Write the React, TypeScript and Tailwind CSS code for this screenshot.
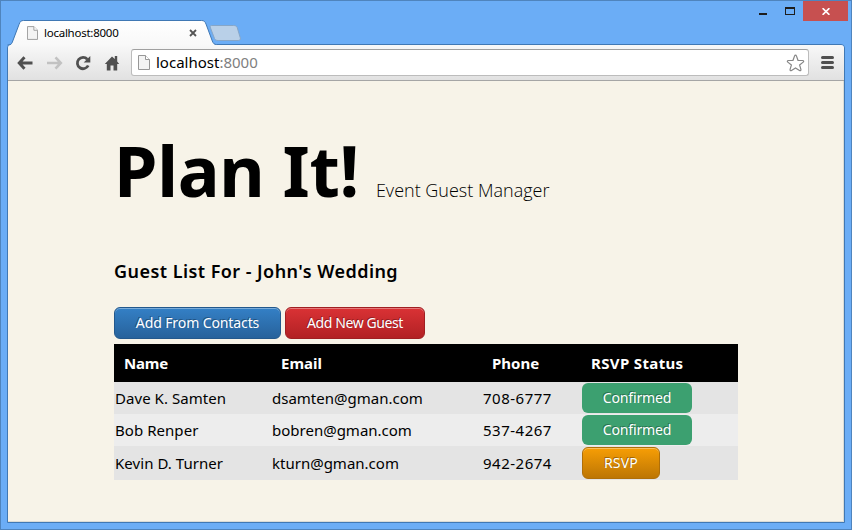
import type { ReactNode } from "react";

function PageIcon({ className }: { className: string }) {
  return (
    <svg viewBox="0 0 12 15" className={className} fill="none">
      <path d="M.5.5h7l4 4v10H.5z" fill="#f3f3f3" stroke="#979797" />
      <path d="M7.5.5v4h4" fill="#fff" stroke="#979797" />
    </svg>
  );
}

function TitleBar() {
  return (
    <header className="relative z-10 flex h-[44px] items-start">
      <svg viewBox="0 0 240 26" className="mt-[19px] -mr-[233px] h-[26px] w-[240px] shrink-0">
        <defs>
          <linearGradient id="tab" x1="0" y1="0" x2="0" y2="1">
            <stop offset="0" stopColor="#ffffff" />
            <stop offset="1" stopColor="#f8f8f8" />
          </linearGradient>
        </defs>
        <path
          d="M7 26c2-.3 3.500-1.500 4.300-3.500l6.700-18c1.100-3 2-4 4.500-4h178c2.500 0 3.500 1 4.500 3.500l6.300 17c1 2.500 2 3.500 4 3.500V26z"
          fill="url(#tab)"
        />
        <path
          d="M6.500 25c2.500 0 4-.7 4.800-2.800l6.700-17.700c1.100-3 2-4 4.500-4h178c2.500 0 3.500 1 4.500 3.500l6.300 17c1 2.500 2 3.500 4 3.500"
          fill="none"
          stroke="#4078b4"
        />
        <path
          d="M211.500 5.500h22c2 0 3 .5 3.700 2l3 10c.6 2-.2 3-2 3h-20c-2 0-3-.5-3.700-2l-4-10.500c-.6-1.600-.5-2.500 1-2.500z"
          fill="#b9d0e8"
          stroke="#86a6c8"
          transform="translate(-1 0)"
        />
      </svg>
      <div className="z-10 mt-[19px] ml-[19px] flex h-[25px] w-[170px] items-center">
        <PageIcon className="mt-px h-[14px] w-[11px]" />
        <span className="ml-[6px] grow text-[11.5px] leading-[16px] tracking-[-0.25px] text-black">localhost:8000</span>
        <svg viewBox="0 0 8 8" className="mt-px h-[8px] w-[8px]">
          <path d="M1 1l6 6M7 1L1 7" stroke="#555" strokeWidth="1.800" />
        </svg>
      </div>
      <div className="grow" />
      <svg viewBox="0 0 52 20" className="h-[20px] w-[52px]">
        <path d="M8 12h8v2H8z" fill="#1d1d1d" />
        <path d="M34 6h10v8H34zM35 8v5h8V8z" fill="#1d1d1d" fillRule="evenodd" />
      </svg>
      <div className="mr-[3px] flex h-[20px] w-[45px] items-center justify-center bg-[#c75050]">
        <svg viewBox="0 0 8 7" className="mt-px h-[7px] w-[8px]">
          <path d="M.6.2l6.800 6.600M7.400.2L.6 6.800" stroke="#fff" strokeWidth="1.700" />
        </svg>
      </div>
    </header>
  );
}

function Toolbar() {
  return (
    <div className="flex h-[36px] items-center rounded-t-[3px] border-b border-[#a5a5a5] bg-gradient-to-b from-[#f8f8f8] to-[#e1e1e1]">
      <svg viewBox="0 0 16 14" className="ml-[9px] h-[14px] w-[16px]">
        <path d="M7.500 1.300L2.200 7l5.300 5.700M2.500 7H15.500" fill="none" stroke="#505050" strokeWidth="2.900" />
      </svg>
      <svg viewBox="0 0 16 14" className="ml-[14px] h-[14px] w-[16px]">
        <path d="M8.500 1.300L13.800 7l-5.300 5.700M13.500 7H0" fill="none" stroke="#c2c2c2" strokeWidth="2.600" />
      </svg>
      <svg viewBox="0 0 16 16" className="ml-[12px] h-[16px] w-[16px]">
        <path d="M12.300 4.200A5.700 5.700 0 1 0 13.200 10.500" fill="none" stroke="#505050" strokeWidth="2.800" />
        <path d="M15.300 1v6.600H8.700z" fill="#505050" />
      </svg>
      <svg viewBox="0 0 16 16" className="ml-[13px] h-[16px] w-[16px]">
        <path d="M8 1.500L.8 9h2v6.500h3.700v-5h3v5h3.700V9h2L13.200 6.500V1h-2.400v3z" fill="#505050" />
      </svg>
      <div className="ml-[11px] flex h-[27px] w-[678px] items-center rounded-[3px] border border-[#bcbcbc] border-t-[#a0a0a0] bg-white">
        <PageIcon className="ml-[6px] h-[15px] w-[12px]" />
        <span className="ml-[6px] grow pb-px text-[15px] leading-[22px] tracking-[0px] text-black">
          localhost<span className="text-[#808080]">:8000</span>
        </span>
        <svg viewBox="0 0 19 18" className="mr-[3px] h-[18px] w-[19px]">
          <path
            d="M9.500 1.200c.5 0 .8.400 1 .9l1.500 4.200 4.700.2c1 .1 1.300 1 .5 1.600l-3.600 2.900 1.300 4.400c.3 1-.5 1.600-1.400 1.100L9.500 14l-4 2.500c-.9.500-1.700-.1-1.400-1.100L5.400 11 1.800 8.100C1 7.500 1.300 6.600 2.300 6.500L7 6.300l1.500-4.200c.2-.5.500-.9 1-.9z"
            fill="#fff"
            stroke="#868686"
            strokeWidth="1.200"
          />
        </svg>
      </div>
      <svg viewBox="0 0 13 13" className="ml-[12px] h-[13px] w-[13px]">
        <path d="M1.500 1.500h10M1.500 6.500h10M1.500 11.500h10" stroke="#505050" strokeWidth="3" strokeLinecap="round" />
      </svg>
    </div>
  );
}

const buttonBase =
  "flex items-center justify-center rounded-[6px] pb-px text-[14px] leading-[20px] text-white [text-shadow:-1px_-1px_0_rgba(0,0,0,0.3)]";
const raised = "h-[32px] border shadow-[inset_0_1px_0_rgba(255,255,255,0.35)] bg-gradient-to-b";

function Button({ className, children }: { className: string; children: ReactNode }) {
  return <button className={`${buttonBase} ${className}`}>{children}</button>;
}

const guests = [
  { name: "Dave K. Samten", email: "dsamten@gman.com", phone: "708-6777", confirmed: true },
  { name: "Bob Renper", email: "bobren@gman.com", phone: "537-4267", confirmed: true },
  { name: "Kevin D. Turner", email: "kturn@gman.com", phone: "942-2674", confirmed: false },
];

const columns = "grid grid-cols-[157px_211px_99px_157px] items-center";

function GuestTable() {
  return (
    <section className="mt-[5px] text-[15px] leading-[20px] text-black">
      <div className={`${columns} h-[38px] bg-black pl-[10px] font-bold text-white`}>
        <span className="tracking-[-0.2px]">Name</span>
        <span>Email</span>
        <span>Phone</span>
        <span className="tracking-[0.35px]">RSVP Status</span>
      </div>
      {guests.map((g) => (
        <div
          key={g.name}
          className={`${columns} pl-px ${g.confirmed ? "h-[32px]" : "h-[34px]"} odd:bg-[#ededed] even:bg-[#e4e4e4]`}
        >
          <span className="tracking-[0.05px]">{g.name}</span>
          <span>{g.email}</span>
          <span className="tracking-[0.5px]">{g.phone}</span>
          {g.confirmed ? (
            <Button className="h-[30px] w-[110px] bg-[#3ca070] tracking-[-0.15px]">Confirmed</Button>
          ) : (
            <Button className={`${raised} w-[78px] border-[#b06f08] from-[#f79e05] to-[#bd7604] tracking-[0.2px]`}>
              RSVP
            </Button>
          )}
        </div>
      ))}
    </section>
  );
}

export default function App() {
  return (
    <div className="flex h-[530px] w-[852px] flex-col overflow-hidden border border-[#4f84bd] bg-[#6badf6] font-['Noto_Sans',sans-serif]">
      <TitleBar />
      <div className="mx-[6px] mb-[6px] -mt-px flex grow flex-col rounded-t-[4px] border border-[#4078b4]">
        <Toolbar />
        <main className="grow border-r border-b border-[#d9dbd6] bg-[#f7f3e8] pl-[106px]">
          <div className="w-[624px]">
            <div className="flex h-[156px] items-baseline pt-[41px] whitespace-nowrap">
              <h1 className="text-[70px] leading-[96px] font-bold tracking-[-0.3px] text-black">Plan It!</h1>
              <p className="ml-[17px] font-['Open_Sans',sans-serif] text-[18px] font-light text-black">
                Event Guest Manager
              </p>
            </div>
            <h2 className="mt-[21px] text-[18px] leading-[26px] font-semibold tracking-[0.45px] text-black">
              Guest List For - John's Wedding
            </h2>
            <div className="mt-[23px] flex gap-[4px]">
              <Button className={`${raised} w-[167px] border-[#23588c] from-[#3480c6] to-[#27629b] tracking-[-0.1px]`}>
                Add From Contacts
              </Button>
              <Button className={`${raised} w-[140px] border-[#a01f22] from-[#da3235] to-[#b22124] tracking-[-0.4px]`}>
                Add New Guest
              </Button>
            </div>
            <GuestTable />
          </div>
        </main>
      </div>
    </div>
  );
}
